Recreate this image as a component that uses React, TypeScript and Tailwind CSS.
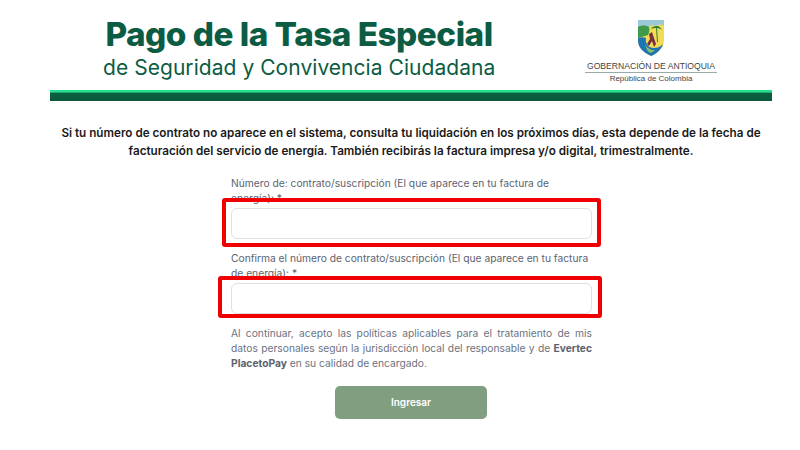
const inter = "font-['Inter',sans-serif]";

function Escudo() {
  return (
    <svg viewBox="0 0 28 38" className="w-[28px] h-[38px]">
      <path d="M1 1h26v20c0 9-7 13-13 16C8 34 1 30 1 21z" fill="#f2dc55" />
      <path d="M1 1h26v6c-3-2-6-1-8 0-3-1-6 0-8 1-3-1-7 0-10 1z" fill="#9cc9d8" />
      <path d="M1 8c3-2 8-2 11 0 1 3 0 6-1 8-3 1-7 2-10 3z" fill="#3f9a4a" />
      <path d="M1 19c3-1 6-1 8 0-1 5 2 10 8 10 3 0 6-1 9-4-2 6-7 10-12 12C8 34 1 30 1 21z" fill="#1f74b5" />
      <path d="M8 25c2 4 5 6 10 6-2 2-3 2-5 3-3-2-4-5-5-9z" fill="#86c26a" />
      <path d="M12 15l3-2 4 12-2 3-2-6-3 5-2-2 3-5z" fill="#7a2f3f" />
      <path d="M20 7c-3 0-5 1-6 3 2-1 3-1 5-1l1 14h1l-1-14c2 0 4 1 5 2-1-2-3-4-5-4z" fill="#2f7d3a" />
    </svg>
  );
}

function Campo({ label }: { label: string }) {
  return (
    <div>
      <label className={`block h-[32px] text-[10.25px] leading-[15px] text-[#5c6370] ${inter}`}>{label}</label>
      <input
        type="text"
        className="relative block w-full h-[31px] rounded-[6px] border border-[#dfe1e6] bg-white"
      />
    </div>
  );
}

export default function App() {
  return (
    <div className="relative w-[800px] h-[450px] overflow-hidden bg-white">
      <header className="flex justify-between w-[722px] h-[90px] ml-[50px]">
        <div className="ml-[53px] mt-[14px] w-[392px] text-center text-[#0b5c43] font-['Inter',sans-serif] whitespace-nowrap">
          <h1 className="text-[33.3px] leading-[40px] font-extrabold tracking-[-0.5px]">Pago de la Tasa Especial</h1>
          <p className="text-[21px] leading-[25px] mt-[1px] tracking-[0.05px]">de Seguridad y Convivencia Ciudadana</p>
        </div>
        <div className="flex flex-col items-center w-[132px] mr-[55px] pt-[19px] font-['Liberation_Sans',sans-serif]">
          <Escudo />
          <p className="mt-[3px] w-full text-center text-[8.6px] leading-[12px] text-[#444] border-b border-[#9aa] whitespace-nowrap">
            GOBERNACIÓN DE ANTIOQUIA
          </p>
          <p className="text-[8px] leading-[11px] text-[#444]">República de Colombia</p>
        </div>
      </header>
      <div className="w-[722px] h-[11px] ml-[50px] bg-[linear-gradient(#26e08f_0,#26e08f_18%,#0a5f40_30%,#0a5a3c_100%)]" />

      <p className={`mt-[23px] w-[722px] ml-[50px] text-center text-[11.7px] leading-[18px] font-semibold text-[#1a1a1a] ${inter}`}>
        Si tu número de contrato no aparece en el sistema, consulta tu liquidación en los próximos días, esta depende de la fecha de facturación del servicio de energía. También recibirás la factura impresa y/o digital, trimestralmente.
      </p>

      <form className="w-[361px] ml-[231px] mt-[16px]">
        <div className="flex flex-col gap-[12px]">
          <Campo label="Número de: contrato/suscripción (El que aparece en tu factura de energía): *" />
          <Campo label="Confirma el número de contrato/suscripción (El que aparece en tu factura de energía): *" />
        </div>
        <p className={`mt-[12px] text-[10.25px] leading-[15px] text-justify text-[#6b7280] ${inter}`}>
          Al continuar, acepto las políticas aplicables para el tratamiento de mis datos personales según la jurisdicción local del responsable y de <b className="font-bold text-[#5c6370]">Evertec PlacetoPay</b> en su calidad de encargado.
        </p>
        <button
          type="button"
          className={`block ml-[104px] mt-[15px] w-[152px] h-[33px] rounded-[5px] bg-[#7f9f80] text-white text-[10px] font-semibold ${inter}`}
        >
          Ingresar
        </button>
      </form>

      {/* marcas rojas sobre los campos */}
      <div className="absolute left-[222px] top-[198px] w-[379px] h-[49px] rounded-[3px] border-[4px] border-[#f00000]" />
      <div className="absolute left-[218px] top-[276px] w-[384px] h-[42px] rounded-[3px] border-[4px] border-[#f00000]" />
    </div>
  );
}
